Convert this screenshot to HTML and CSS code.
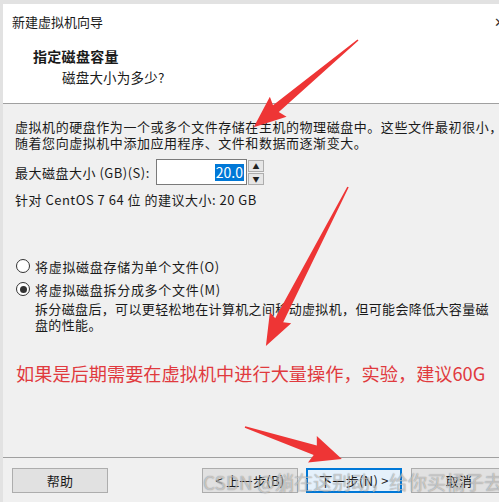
FILE: index.html
```html
<!DOCTYPE html>
<html lang="zh-CN">
<head>
    <meta charset="UTF-8">
    <title>新建虚拟机向导</title>
    <link rel="stylesheet" href="styles.css">
</head>
<body>

    <div class="window">
        <!-- Bagian atas putih -->
        <div class="header">
            <div class="titlebar">
                <span class="title">新建虚拟机向导</span>
                <span class="close">✕</span>
            </div>
            <div class="heading">指定磁盘容量</div>
            <div class="subheading">磁盘大小为多少?</div>
        </div>

        <!-- Isi wizard -->
        <div class="content">
            <p class="intro">虚拟机的硬盘作为一个或多个文件存储在主机的物理磁盘中。这些文件最初很小，<br>随着您向虚拟机中添加应用程序、文件和数据而逐渐变大。</p>

            <div class="size-row">
                <label class="size-label">最大磁盘大小 (GB)(S):</label>
                <div class="size-input"><span class="selected">20.0</span></div>
                <div class="spin">
                    <span class="spin-btn">▲</span>
                    <span class="spin-btn">▼</span>
                </div>
            </div>

            <p class="recommend">针对 CentOS 7 64 位 的建议大小: 20 GB</p>

            <div class="radio-row">
                <span class="radio"></span>
                <span>将虚拟磁盘存储为单个文件(O)</span>
            </div>
            <div class="radio-row second">
                <span class="radio checked"></span>
                <span>将虚拟磁盘拆分成多个文件(M)</span>
            </div>
            <p class="radio-desc">拆分磁盘后，可以更轻松地在计算机之间移动虚拟机，但可能会降低大容量磁<br>盘的性能。</p>

            <p class="note">如果是后期需要在虚拟机中进行大量操作，实验，建议60G</p>
        </div>

        <!-- Tombol bawah -->
        <div class="footer">
            <button class="btn help">帮助</button>
            <button class="btn back">&lt; 上一步(B)</button>
            <button class="btn next">下一步(N) &gt;</button>
            <button class="btn cancel">取消</button>
        </div>
    </div>

    <!-- Panah merah di atas screenshot -->
    <svg class="arrows" width="499" height="502" viewBox="0 0 499 502">
        <g fill="#ee3535">
            <polygon transform="translate(358 40) rotate(140.1)" points="0,-0.8 107,-4.5 104,-13 136,0 104,13 107,4.5 0,0.8"></polygon>
            <polygon transform="translate(348 187) rotate(117.3)" points="0,-0.8 150,-4.5 147,-12 179,0 147,12 150,4.5 0,0.8"></polygon>
            <polygon transform="translate(245 427) rotate(18.3)" points="0,-0.8 74,-5 71,-14 102,0 71,14 74,5 0,0.8"></polygon>
        </g>
    </svg>

    <div class="watermark">CSDN @躺在这别动，给你买橘子去</div>

</body>
</html>
```

FILE: styles.css
```css
/* Gaya umum */
* {
    margin: 0;
    padding: 0;
    box-sizing: border-box;
}

body {
    width: 499px;
    height: 502px;
    overflow: hidden;
    background: #e2e2e2;
    font-family: "Noto Sans CJK SC", "Noto Sans", sans-serif;
    font-size: 13px;
    letter-spacing: 0.5px;
    color: #1a1a1a;
    position: relative;
}

.window {
    margin: 4px 0 0 3px;
    background: #f0f0f0;
    height: 498px;
    overflow: hidden;
}

/* Header putih */
.header {
    background: #fff;
    height: 100px;
    border-bottom: 1px solid #a0a0a0;
    padding-top: 9px;
}

.titlebar {
    display: flex;
    justify-content: space-between;
    padding-left: 9px;
    line-height: 18px;
    letter-spacing: 0;
}

.close {
    font-size: 13px;
    margin-right: -6px;
    color: #333;
}

.heading {
    margin-top: 16px;
    padding-left: 30px;
    font-size: 14px;
    font-weight: bold;
    line-height: 18px;
    letter-spacing: 0.3px;
}

.subheading {
    margin-top: 3px;
    padding-left: 59px;
    font-size: 13.5px;
    line-height: 18px;
    letter-spacing: 0.2px;
}

/* Isi */
.content {
    height: 353px;
    padding: 15px 0 0 12px;
}

.intro {
    line-height: 16px;
    white-space: nowrap;
    letter-spacing: 0.55px;
}

.size-row {
    display: flex;
    align-items: center;
    height: 26px;
    margin-top: 8px;
}

.size-label {
    width: 141px;
    white-space: nowrap;
}

.size-input {
    width: 91px;
    height: 26px;
    background: #fff;
    border: 1px solid #7a7a7a;
    display: flex;
    justify-content: flex-end;
    align-items: center;
    padding-right: 2px;
}

.selected {
    background: #0078d7;
    color: #fff;
    font-size: 14px;
    line-height: 17px;
    padding: 0 1px;
    letter-spacing: 0;
}

.spin {
    display: flex;
    flex-direction: column;
    margin-left: 1px;
    gap: 1px;
}

.spin-btn {
    width: 16px;
    height: 12px;
    border: 1px solid #adadad;
    background: #e6e6e6;
    font-size: 7px;
    line-height: 10px;
    text-align: center;
    color: #222;
    letter-spacing: 0;
}

.recommend {
    margin-top: 7px;
    line-height: 16px;
}

.radio-row {
    display: flex;
    align-items: center;
    height: 20px;
    margin-top: 48px;
    gap: 5px;
    padding-left: 1px;
    letter-spacing: 0.7px;
}

.radio-row.second {
    margin-top: 3px;
}

.radio {
    width: 14px;
    height: 14px;
    border: 1px solid #333;
    border-radius: 50%;
    background: #fff;
    display: flex;
    justify-content: center;
    align-items: center;
}

.radio.checked::after {
    content: "";
    width: 7px;
    height: 7px;
    border-radius: 50%;
    background: #333;
}

.radio-desc {
    margin-top: 2px;
    padding-left: 20px;
    line-height: 16px;
    white-space: nowrap;
    letter-spacing: 0.35px;
}

.note {
    margin-top: 28px;
    padding-left: 1px;
    font-size: 18.2px;
    line-height: 24px;
    color: #e03a3e;
    white-space: nowrap;
    letter-spacing: 0;
}

/* Tombol */
.footer {
    border-top: 1px solid #a0a0a0;
    padding: 10px 0 0 9px;
    display: flex;
    white-space: nowrap;
}

.btn {
    flex: none;
    width: 96px;
    height: 25px;
    background: #e1e1e1;
    border: 1px solid #adadad;
    font-family: inherit;
    font-size: 13px;
    letter-spacing: 0.3px;
    color: #1a1a1a;
}

.back {
    margin-left: 94px;
}

.next {
    margin-left: 8px;
    border: 2px solid #0078d7;
    background: #e5f1fb;
}

.cancel {
    margin-left: 9px;
}

/* Overlay */
.arrows {
    position: absolute;
    left: 0;
    top: 0;
    pointer-events: none;
}

.watermark {
    position: absolute;
    left: 203px;
    top: 469px;
    font-size: 19px;
    line-height: 26px;
    letter-spacing: 0;
    color: rgba(255, 255, 255, 0.55);
    text-shadow: 0 0 1px rgba(0, 0, 0, 0.5);
    white-space: nowrap;
    pointer-events: none;
}
```
